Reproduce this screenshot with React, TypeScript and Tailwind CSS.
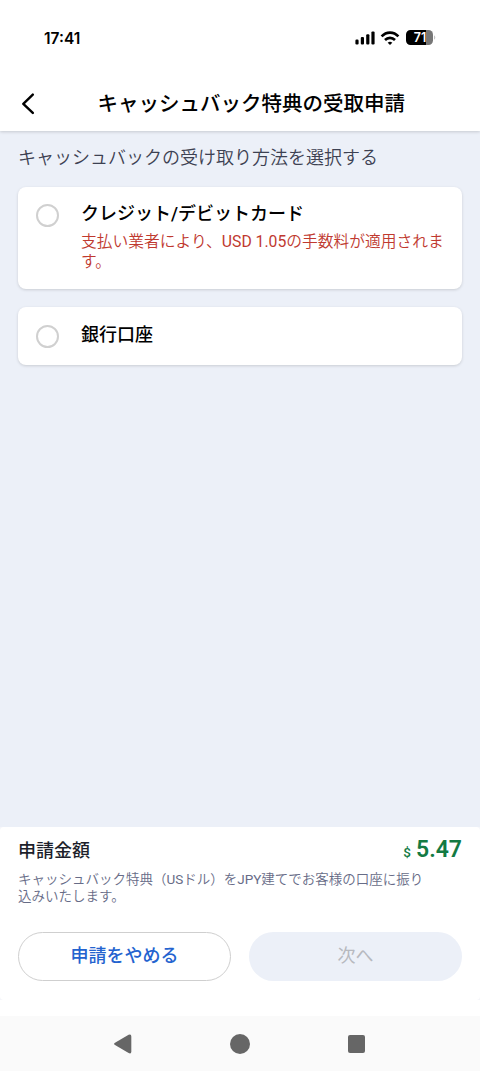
import type { ReactNode } from "react";

const SignalIcon = () => (
  <svg width="20" height="14" viewBox="0 0 20 14" fill="#000">
    <rect x="0.4" y="8.6" width="3.2" height="5" rx="1.1" />
    <rect x="5.8" y="6" width="3.2" height="7.6" rx="1.1" />
    <rect x="11.2" y="3.2" width="3.2" height="10.4" rx="1.1" />
    <rect x="16.4" y="0.4" width="3.2" height="13.2" rx="1.1" />
  </svg>
);

const WifiIcon = () => (
  <svg width="20" height="14" viewBox="0 0 20 14" fill="none" stroke="#000" strokeWidth="2.6">
    <path d="M1.6 5.4C6.3 0.3 13.7 0.3 18.4 5.4" />
    <path d="M5 9C7.8 6.1 12.2 6.1 15 9" />
    <path d="M10 13.9L7.7 11.7C9 10.3 11 10.3 12.3 11.7Z" fill="#000" stroke="none" />
  </svg>
);

const BatteryIcon = () => (
  <div className="relative h-[15px] w-[30px]">
    <svg width="30" height="15" viewBox="0 0 30 15">
      <path d="M4.5 0H20.5V15H4.5A4.5 4.5 0 0 1 0 10.5V4.5A4.5 4.5 0 0 1 4.5 0Z" fill="#000" />
      <path d="M20.5 0H22.5A4.5 4.5 0 0 1 27 4.5V10.5A4.5 4.5 0 0 1 22.5 15H20.5Z" fill="#777" />
      <path d="M28 5.3C29.8 6 29.8 9 28 9.7Z" fill="#c4c4c4" />
    </svg>
    <span className="absolute inset-0 w-[28px] text-center font-['Inter',sans-serif] text-[12.5px] leading-[15px] font-semibold text-white">
      71
    </span>
  </div>
);

function Option({ title, children }: { title: string; children?: ReactNode }) {
  return (
    <button className="flex w-full items-start gap-[22px] rounded-[8px] bg-white pt-[14.5px] pr-[15px] pb-[17.5px] pl-[18px] text-left shadow-[0_1px_3px_rgba(0,0,0,0.15)]">
      <span className="mt-[3px] size-[23px] shrink-0 rounded-full border-2 border-[#d0d0d0]" />
      <span className="block min-w-0 flex-1">
        <span className="block text-[18px] leading-[26px] font-medium text-black">{title}</span>
        {children}
      </span>
    </button>
  );
}

export default function App() {
  return (
    <div className="flex h-[1071px] w-[480px] flex-col overflow-hidden bg-white font-['Roboto','Noto_Sans_CJK_JP',sans-serif]">
      <div className="relative z-20 flex h-[77px] shrink-0 items-start justify-between bg-white pt-[30px] pr-[14px] pl-[44px]">
        <span className="font-['Inter',sans-serif] text-[15.5px] leading-[17px] font-semibold text-black">17:41</span>
        <div className="flex items-center gap-[6px]">
          <span className="-mr-[1px]">
            <SignalIcon />
          </span>
          <WifiIcon />
          <BatteryIcon />
          <span className="w-[24px]" />
        </div>
      </div>

      <header className="relative z-10 flex h-[53.5px] shrink-0 items-center bg-white pl-[21px] shadow-[0_1px_3px_rgba(0,0,0,0.16)]">
        <svg width="14" height="22" viewBox="0 0 14 22" fill="none" stroke="#000" strokeWidth="2.4" strokeLinecap="round" strokeLinejoin="round">
          <path d="M11.8 1.6L2.3 10.8L11.8 19.9" />
        </svg>
        <h1 className="ml-[62.5px] text-[20.5px] leading-[30px] font-medium whitespace-nowrap text-black">
          キャッシュバック特典の受取申請
        </h1>
      </header>

      <main className="flex flex-1 flex-col bg-[#ecf0f8] px-[18px] pt-[14.5px]">
        <h2 className="mb-[15.5px] text-[18px] leading-[26px] font-[350] text-[#3d4152]">キャッシュバックの受け取り方法を選択する</h2>
        <div className="flex flex-col gap-[18px]">
          <Option title="クレジット/デビットカード">
            <span className="mt-[4.5px] block text-[15.75px] leading-[20px] font-[350] whitespace-nowrap text-[#c0392f]">
              支払い業者により、<span className="font-normal">USD 1.05</span>の手数料が適用されま
              <br />
              す。
            </span>
          </Option>
          <Option title="銀行口座" />
        </div>
      </main>

      <div className="shrink-0 bg-[#f5f6fa]">
        <section className="h-[173px] rounded-[4px] bg-white px-[18px] pt-[7px]">
          <div className="flex h-[31px] items-center justify-between">
            <span className="pt-[2px] text-[18px] leading-[30px] font-medium text-[#1d1f2b]">申請金額</span>
            <span className="flex items-baseline gap-[5px] font-medium text-[#137a43]">
              <span className="text-[13.5px]">$</span>
              <span className="text-[23px] leading-[30px] font-semibold">5.47</span>
            </span>
          </div>
          <p className="mt-[6px] text-[13.5px] leading-[17px] font-[350] whitespace-nowrap text-[#676c87]">
            キャッシュバック特典（<span className="font-normal">US</span>ドル）を<span className="font-normal">JPY</span>建てでお客様の口座に振り
            <br />
            込みいたします。
          </p>
          <div className="mt-[27px] grid grid-cols-2 gap-[18px]">
            <button className="h-[49px] rounded-full border border-[#cfcfcf] pb-[2px] text-[18px] font-medium text-[#2463cf]">申請をやめる</button>
            <button className="h-[49px] rounded-full bg-[#ecf0f8] pb-[2px] text-[18px] font-normal text-[#b7b9bf]" disabled>
              次へ
            </button>
          </div>
        </section>
      </div>

      <div className="h-[16px] shrink-0" />
      <nav className="flex h-[55px] shrink-0 items-start bg-[#fafafa] pt-[18px] pl-[114px]">
        <svg width="18" height="20" viewBox="0 0 18 20" fill="#666">
          <path d="M1 8.7L14.6 0.8Q17.3 -0.4 17.3 2.4V17.6Q17.3 20.3 14.6 19.1L1 11.1Q-0.8 9.9 1 8.7Z" />
        </svg>
        <span className="ml-[98px] size-[19.5px] rounded-full bg-[#666]" />
        <span className="mt-[1px] ml-[98.5px] h-[18px] w-[17px] rounded-[2px] bg-[#666]" />
      </nav>
    </div>
  );
}
